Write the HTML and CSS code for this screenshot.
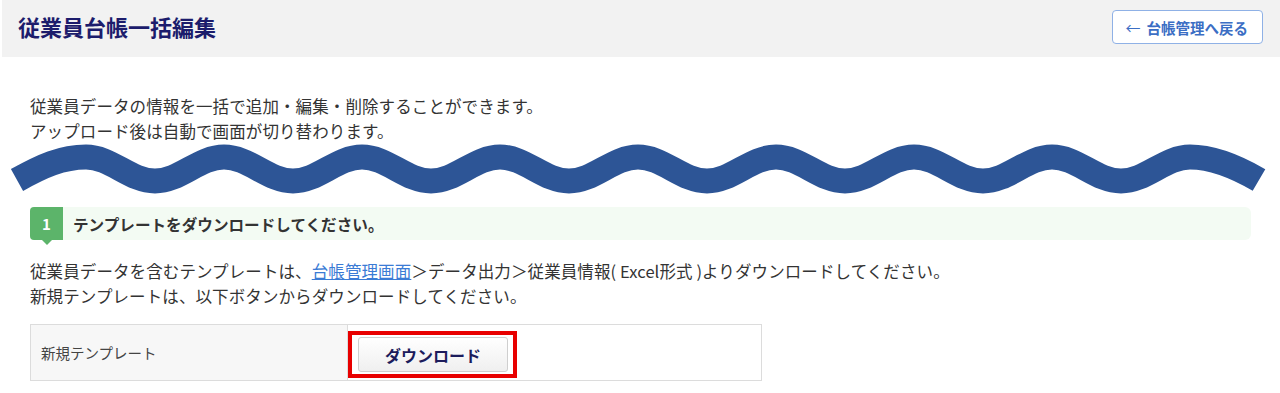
FILE: index.html
```html
<!DOCTYPE html>
<html lang="ja">
<head>
  <meta charset="utf-8">
  <title>従業員台帳一括編集</title>
  <link rel="stylesheet" href="styles.css">
</head>
<body>
  <header class="page-header">
    <h1>従業員台帳一括編集</h1>
    <a class="back-button" href="#"><span class="arrow">←</span> 台帳管理へ戻る</a>
  </header>

  <main class="content">
    <p class="lead">
      従業員データの情報を一括で追加・編集・削除することができます。<br>
      アップロード後は自動で画面が切り替わります。
    </p>

    <svg class="wave" width="1280" height="60" viewBox="0 0 1280 60">
      <path d="M 17 41
               C 42 27, 62 18, 86 18
               C 111 18, 130 42, 155 42 C 180 42, 199 18, 224 18
               C 249 18, 268 42, 293 42 C 318 42, 337 18, 362 18
               C 387 18, 406 42, 431 42 C 456 42, 475 18, 500 18
               C 525 18, 544 42, 569 42 C 594 42, 613 18, 638 18
               C 663 18, 682 42, 707 42 C 732 42, 751 18, 776 18
               C 801 18, 820 42, 845 42 C 870 42, 889 18, 914 18
               C 939 18, 958 42, 983 42 C 1008 42, 1027 18, 1052 18
               C 1077 18, 1096 42, 1121 42 C 1146 42, 1165 18, 1190 18
               C 1213 18, 1235 27, 1259 41"
            fill="none" stroke="#2d5596" stroke-width="25"/>
    </svg>

    <div class="step">
      <span class="step-num">1</span>
      <span class="step-title">テンプレートをダウンロードしてください。</span>
    </div>

    <p class="note">
      従業員データを含むテンプレートは、<a href="#">台帳管理画面</a>＞データ出力＞従業員情報( Excel形式 )よりダウンロードしてください。<br>
      新規テンプレートは、以下ボタンからダウンロードしてください。
    </p>

    <table class="download-table">
      <tr>
        <th>新規テンプレート</th>
        <td>
          <div class="highlight">
            <button class="download-button">ダウンロード</button>
          </div>
        </td>
      </tr>
    </table>
  </main>
</body>
</html>
```

FILE: styles.css
```css
body {
  margin: 0;
  font-family: "Noto Sans CJK JP", "Liberation Sans", sans-serif;
  color: #333;
  background: white;
}
.page-header {
  display: flex;
  align-items: center;
  justify-content: space-between;
  height: 57px;
  margin-left: 2px;
  padding: 0 17px 0 16px;
  background-color: #f2f2f2;
}
h1 {
  margin: -5px 0 0 0;
  font-size: 22px;
  font-weight: bold;
  color: #1c1c6c;
}
.back-button {
  display: inline-flex;
  align-items: center;
  gap: 6px;
  height: 32px;
  padding: 0 14px 0 12px;
  border: 1px solid #8fb1e6;
  border-radius: 4px;
  background: white;
  color: #3b6ec4;
  font-size: 14.5px;
  font-weight: bold;
  text-decoration: none;
  margin-top: -3px;
}
.back-button .arrow {
  font-weight: normal;
  font-size: 15px;
}
.content {
  padding: 37px 29px 0 30px;
}
.lead,
.note {
  margin: 0;
  font-size: 16.5px;
  letter-spacing: 0.1px;
  line-height: 25px;
}
.wave {
  display: block;
  margin: -5px 0 8px -30px;
}
.step {
  display: flex;
  align-items: center;
  height: 33px;
  background-color: #f3fbf3;
  border-radius: 6px;
}
.step-num {
  position: relative;
  display: flex;
  align-items: center;
  justify-content: center;
  width: 33px;
  height: 33px;
  background-color: #5cb46a;
  border-radius: 4px 0 0 4px;
  color: white;
  font-size: 15px;
  font-weight: bold;
}
.step-num::after {
  content: "";
  position: absolute;
  left: 12px;
  bottom: -5px;
  border-left: 5px solid transparent;
  border-right: 5px solid transparent;
  border-top: 5px solid #5cb46a;
}
.step-title {
  margin-left: 10px;
  font-size: 15.6px;
  font-weight: bold;
  color: #333;
}
.note {
  margin-top: 19px;
}
.note a {
  color: #3a7bd5;
  text-decoration: underline;
}
.download-table {
  margin-top: 15px;
  border-collapse: collapse;
  width: 732px;
}
.download-table th,
.download-table td {
  border: 1px solid #dcdcdc;
  height: 55px;
  padding: 0;
}
.download-table th {
  width: 306px;
  padding-left: 10px;
  text-align: left;
  font-size: 14.5px;
  font-weight: normal;
  color: #444;
  background-color: #f7f7f7;
}
.download-table td {
  vertical-align: top;
  padding: 6px 0 0 0;
  box-sizing: border-box;
}
.highlight {
  width: fit-content;
  border: 4px solid #e80000;
  padding: 2px 5px 2px 6px;
}
.download-button {
  display: block;
  width: 150px;
  height: 35px;
  border: 1px solid #cfcfcf;
  border-radius: 3px;
  background: linear-gradient(#ffffff, #efefef);
  color: #1c1c5c;
  font-family: "Noto Sans CJK JP", "Liberation Sans", sans-serif;
  font-size: 16px;
  font-weight: bold;
  cursor: pointer;
}
```
